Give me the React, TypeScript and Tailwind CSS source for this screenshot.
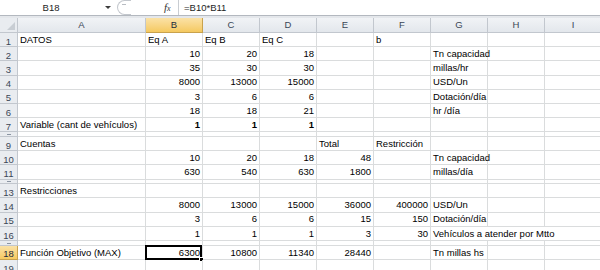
import React from "react";

type Cell = { v: string; bold?: boolean; span?: number };
type Row = { n: number; thin?: boolean; cells: Record<string, string | Cell> };

const COLS = ["A", "B", "C", "D", "E", "F", "G", "H", "I"];

const rows: Row[] = [
  { n: 1, cells: { A: "DATOS", B: "Eq A", C: "Eq B", D: "Eq C", F: "b" } },
  { n: 2, cells: { B: "10", C: "20", D: "18", G: "Tn capacidad" } },
  { n: 3, cells: { B: "35", C: "30", D: "30", G: "millas/hr" } },
  { n: 4, cells: { B: "8000", C: "13000", D: "15000", G: "USD/Un" } },
  { n: 5, cells: { B: "3", C: "6", D: "6", G: "Dotación/día" } },
  { n: 6, cells: { B: "18", C: "18", D: "21", G: "hr /día" } },
  {
    n: 7,
    cells: {
      A: "Variable (cant de vehículos)",
      B: { v: "1", bold: true },
      C: { v: "1", bold: true },
      D: { v: "1", bold: true },
    },
  },
  { n: 8, thin: true, cells: {} },
  { n: 9, cells: { A: "Cuentas", E: "Total", F: "Restricción" } },
  { n: 10, cells: { B: "10", C: "20", D: "18", E: "48", G: "Tn capacidad" } },
  { n: 11, cells: { B: "630", C: "540", D: "630", E: "1800", G: "millas/día" } },
  { n: 12, thin: true, cells: {} },
  { n: 13, cells: { A: "Restricciones" } },
  { n: 14, cells: { B: "8000", C: "13000", D: "15000", E: "36000", F: "400000", G: "USD/Un" } },
  { n: 15, cells: { B: "3", C: "6", D: "6", E: "15", F: "150", G: "Dotación/día" } },
  {
    n: 16,
    cells: { B: "1", C: "1", D: "1", E: "3", F: "30", G: { v: "Vehículos a atender por Mtto", span: 3 } },
  },
  { n: 17, thin: true, cells: {} },
  { n: 18, cells: { A: "Función Objetivo (MAX)", B: "6300", C: "10800", D: "11340", E: "28440", G: "Tn millas hs" } },
  { n: 19, cells: {} },
];

const ACTIVE_COL = "B";
const ACTIVE_ROW = 18;

function FormulaBar() {
  return (
    <div className="flex h-[15px] items-center bg-white text-[#1e1e1e]">
      <div className="w-[102px] text-center">B18</div>
      {/* name box dropdown */}
      <svg width="8" height="5" viewBox="0 0 8 5" className="ml-[2px]">
        <polygon points="1,1 7,1 4,4" fill="#3c3c3c" />
      </svg>
      <div className="ml-[5px] flex h-[15px] w-[14px] items-start rounded-l-full border-y border-l border-[#c3c7cd] pl-[4px] pt-[3px]">
        <div className="h-px w-[4px] bg-[#b8bcc2]" />
      </div>
      <div className="ml-[33px] w-[14px] font-['Liberation_Serif',serif] text-[11px] italic text-[#333]">
        f<span className="text-[8px]">x</span>
      </div>
      <div className="h-full flex-1 border-l border-[#c9cdd2] pl-[5px] leading-[15px]">=B10*B11</div>
    </div>
  );
}

function CornerCell() {
  return (
    <div className="flex items-end justify-end border-b border-r border-[#c2c7ce] bg-[#e9ecf0] pb-[2px] pr-[2px]">
      <svg width="8" height="8" viewBox="0 0 8 8">
        <polygon points="8,0 8,8 0,8" fill="#c8cdd3" />
      </svg>
    </div>
  );
}

function ColHeader({ c }: { c: string }) {
  const active = c === ACTIVE_COL;
  return (
    <div
      className={`flex items-center justify-center border-b border-r ${
        active
          ? "border-[#c9a24c] bg-gradient-to-b from-[#fbe2a6] to-[#f5c95f] text-[#1d2a3c]"
          : "border-[#c2c7ce] bg-gradient-to-b from-[#f1f3f6] to-[#e3e7ec] text-[#3a4656]"
      }`}
    >
      {c}
    </div>
  );
}

function RowHeader({ n, thin }: { n: number; thin?: boolean }) {
  const active = n === ACTIVE_ROW;
  return (
    <div
      className={`flex items-end justify-center overflow-hidden border-b border-r ${
        active
          ? "border-[#c9a24c] bg-gradient-to-b from-[#fbe2a6] to-[#f5c95f] text-[#1d2a3c]"
          : "border-[#c2c7ce] bg-[#e9ecf0] text-[#3a4656]"
      } ${thin ? "" : "items-center"}`}
    >
      {/* hidden-ish rows only show the top sliver of their number */}
      {thin ? <div className="mb-[1px] h-px w-[4px] bg-[#8a94a2]" /> : n}
    </div>
  );
}

function DataRow({ row }: { row: Row }) {
  const out: React.ReactNode[] = [];
  let skip = 0;
  COLS.forEach((c) => {
    if (skip > 0) {
      skip--;
      return;
    }
    const raw = row.cells[c];
    const cell: Cell | undefined = typeof raw === "string" ? { v: raw } : raw;
    const text = cell?.v ?? "";
    const isNum = /^\d+$/.test(text);
    const span = cell?.span ?? 1;
    if (span > 1) skip = span - 1;
    const selected = c === ACTIVE_COL && row.n === ACTIVE_ROW;
    out.push(
      <div
        key={c}
        style={span > 1 ? { gridColumn: `span ${span} / span ${span}` } : undefined}
        className={`relative flex items-center whitespace-nowrap border-b border-r border-[#dadcdd] ${
          isNum ? "justify-end pr-[2px]" : "justify-start pl-[2px]"
        } ${cell?.bold ? "font-bold" : ""}`}
      >
        {row.thin ? null : text}
        {selected && (
          <>
            <div className="pointer-events-none absolute -left-[1px] -top-[1px] bottom-[-1px] right-0 border-2 border-black" />
            <div className="absolute -bottom-[3px] -right-[2px] h-[5px] w-[5px] border border-white bg-black" />
          </>
        )}
      </div>
    );
  });
  return (
    <div
      className={`grid grid-cols-[18px_128px_repeat(8,57px)] ${row.thin ? "h-[4.7px]" : "h-[14.2px]"}`}
    >
      <RowHeader n={row.n} thin={row.thin} />
      {out}
    </div>
  );
}

export default function App() {
  return (
    <div className="h-[270px] w-[600px] overflow-hidden bg-white font-['Liberation_Sans',Arial,sans-serif] text-[9.5px] leading-none text-black">
      <FormulaBar />
      <div className="h-[3px] border-t border-[#b3b8bf] bg-[#e4e7eb]" />
      <div className="grid h-[15px] grid-cols-[18px_128px_repeat(8,57px)]">
        <CornerCell />
        {COLS.map((c) => (
          <ColHeader key={c} c={c} />
        ))}
      </div>
      {rows.map((r) => (
        <DataRow key={r.n} row={r} />
      ))}
    </div>
  );
}
